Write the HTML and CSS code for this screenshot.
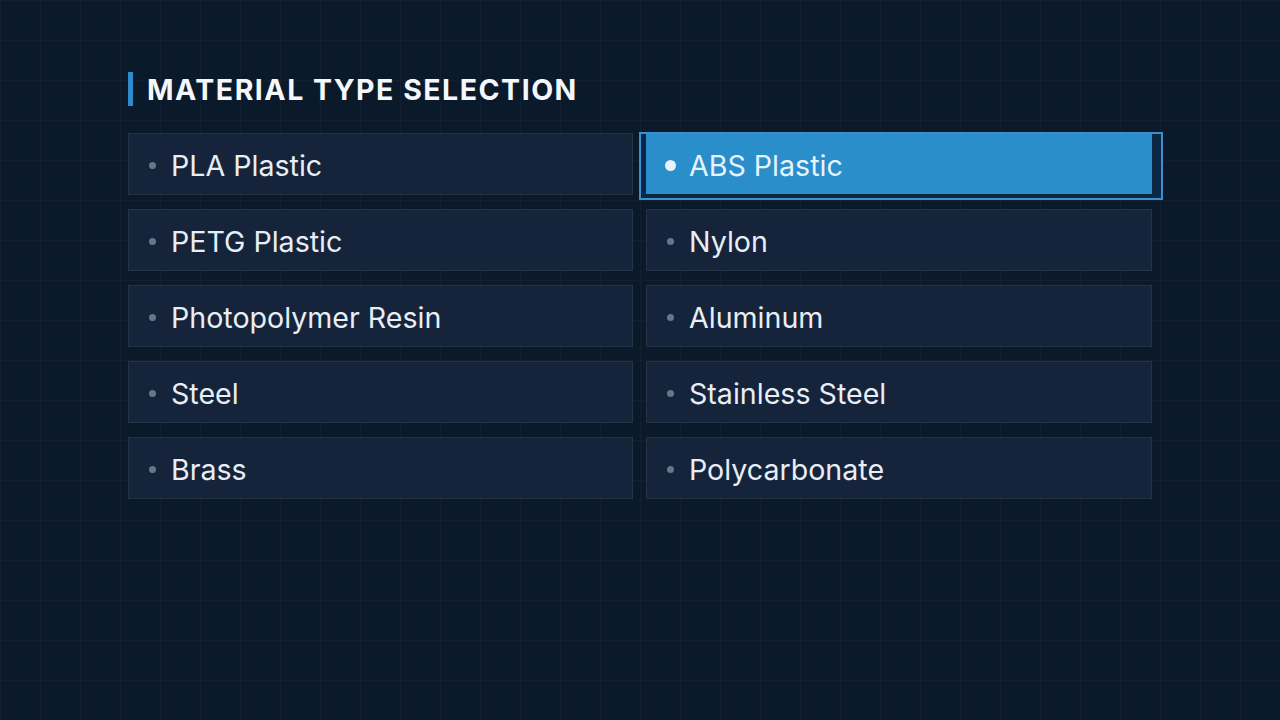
FILE: index.html
```html
<!DOCTYPE html>
<html lang="en">
<head>
    <meta charset="UTF-8">
    <meta name="viewport" content="width=device-width, initial-scale=1.0">
    <title>Material Type Selection</title>
    <link rel="stylesheet" href="styles.css">
</head>
<body>
    <div class="container">
        <h1 class="section-title">Material Type Selection</h1>

        <ul class="material-grid">
            <li class="material-item"><span class="dot"></span>PLA Plastic</li>
            <li class="material-item selected"><span class="dot"></span>ABS Plastic</li>
            <li class="material-item"><span class="dot"></span>PETG Plastic</li>
            <li class="material-item"><span class="dot"></span>Nylon</li>
            <li class="material-item"><span class="dot"></span>Photopolymer Resin</li>
            <li class="material-item"><span class="dot"></span>Aluminum</li>
            <li class="material-item"><span class="dot"></span>Steel</li>
            <li class="material-item"><span class="dot"></span>Stainless Steel</li>
            <li class="material-item"><span class="dot"></span>Brass</li>
            <li class="material-item"><span class="dot"></span>Polycarbonate</li>
        </ul>
    </div>
</body>
</html>
```

FILE: styles.css
```css
* {
    margin: 0;
    padding: 0;
    box-sizing: border-box;
    font-family: Inter, "Noto Sans", sans-serif;
}

html, body {
    height: 100%;
}

body {
    background-color: #0b1a2b;
    background-image:
        linear-gradient(rgba(255,255,255,0.025) 1px, transparent 1px),
        linear-gradient(90deg, rgba(255,255,255,0.025) 1px, transparent 1px);
    background-size: 40px 40px;
    background-position: 0 0;
    padding: 72px 128px;
}

.container {
    width: 1024px;
}

.section-title {
    border-left: 5px solid #2f8ccc;
    padding-left: 14px;
    height: 34px;
    display: flex;
    align-items: center;
    font-size: 28.5px;
    font-weight: 700;
    letter-spacing: 1.5px;
    text-transform: uppercase;
    color: #f4f7fb;
    margin-bottom: 27px;
}

.material-grid {
    list-style: none;
    display: grid;
    grid-template-columns: 505px 506px;
    column-gap: 13px;
    row-gap: 14px;
}

.material-item {
    position: relative;
    height: 62px;
    display: flex;
    align-items: center;
    padding: 2px 0 0 20px;
    background: #15243a;
    border: 1px solid rgba(255,255,255,0.07);
    font-size: 28.6px;
    color: #e8eef5;
}

.dot {
    width: 7px;
    height: 7px;
    border-radius: 50%;
    background: #687689;
    margin-right: 15px;
}

/* selected card: blue fill sitting on a dark framed plate */
.material-item.selected {
    background: transparent;
    border-color: transparent;
    color: #e6f3fd;
    z-index: 1;
}

.material-item.selected::before {
    content: "";
    position: absolute;
    top: -2px;
    left: -8px;
    right: -12px;
    bottom: -6px;
    background: #0c2743;
    border: 2px solid #3b8fce;
    z-index: -2;
}

.material-item.selected::after {
    content: "";
    position: absolute;
    top: 0;
    left: -1px;
    right: -1px;
    bottom: 0;
    background: #2a8ecb;
    z-index: -1;
}

.material-item.selected .dot {
    width: 11px;
    height: 11px;
    background: #e8f3fc;
    margin-left: -2px;
    margin-right: 13px;
}
```
